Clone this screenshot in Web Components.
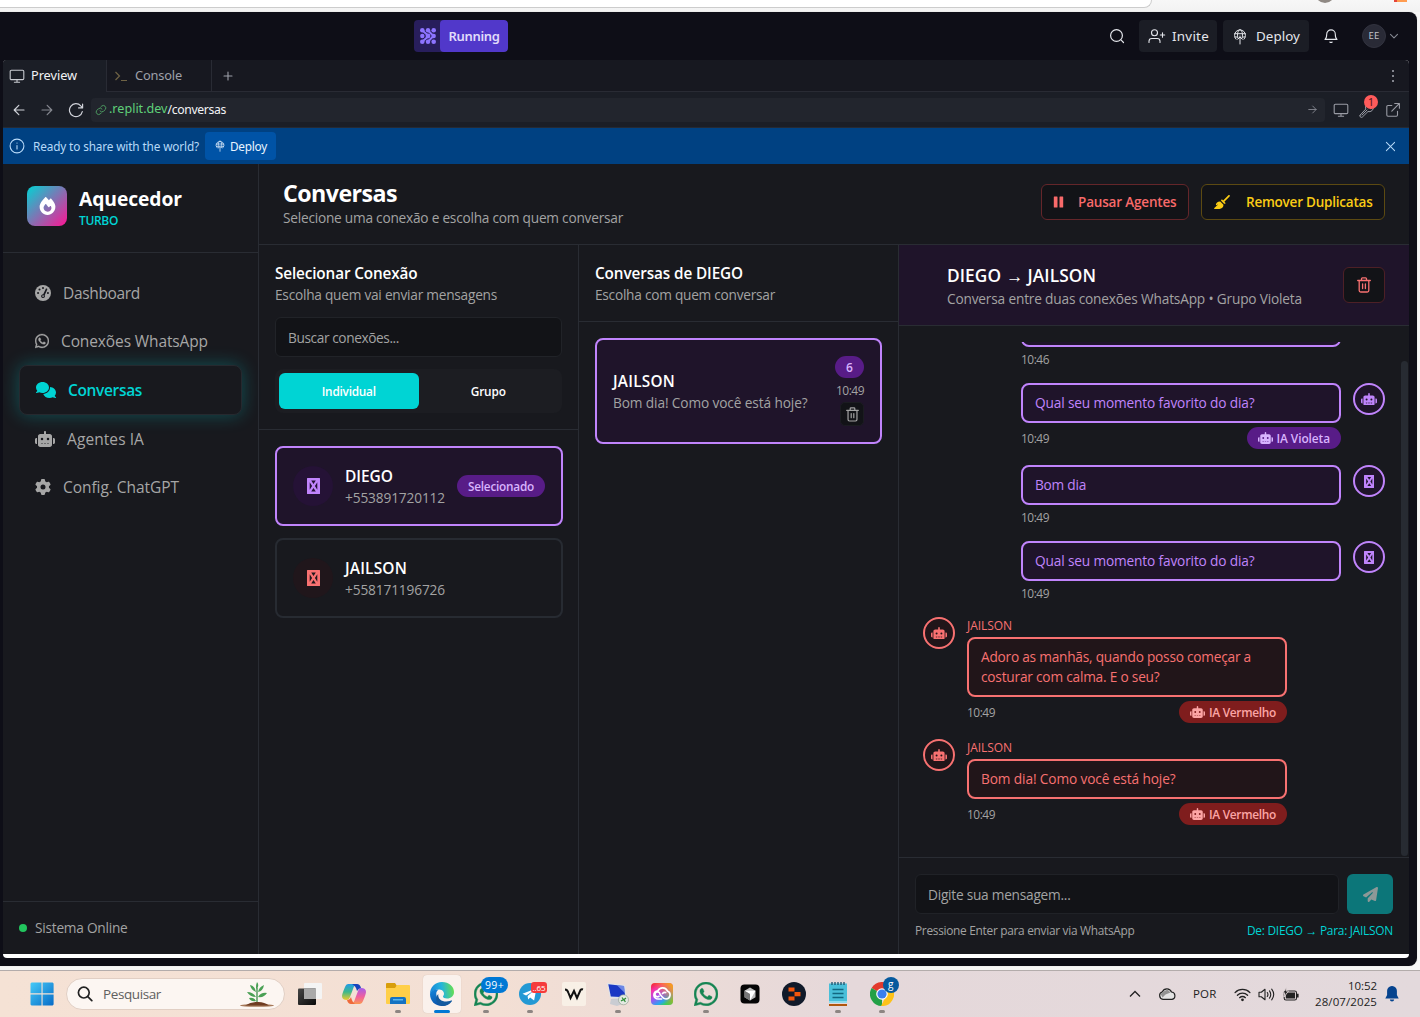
<!DOCTYPE html>
<html lang="pt-BR">
<head>
<meta charset="utf-8">
<title>Aquecedor Turbo</title>
<style>
html,body{margin:0;height:100%;overflow:hidden;background:#f7f7f7}
body{font-family:"Open Sans","Noto Sans",sans-serif}
</style>
</head>
<body>
<desk-screen></desk-screen>
<script>
const robot='<path fill="currentColor" fill-rule="evenodd" d="M320 0c17.7 0 32 14.3 32 32V96H472c39.8 0 72 32.2 72 72V440c0 39.8-32.2 72-72 72H168c-39.8 0-72-32.2-72-72V168c0-39.8 32.2-72 72-72H288V32c0-17.7 14.3-32 32-32zM208 384c-8.8 0-16 7.2-16 16s7.2 16 16 16h32c8.8 0 16-7.2 16-16s-7.2-16-16-16H208zm96 0c-8.8 0-16 7.2-16 16s7.2 16 16 16h32c8.8 0 16-7.2 16-16s-7.2-16-16-16H304zm96 0c-8.8 0-16 7.2-16 16s7.2 16 16 16h32c8.8 0 16-7.2 16-16s-7.2-16-16-16H400zM264 256a40 40 0 1 0 -80 0 40 40 0 1 0 80 0zm152 40a40 40 0 1 0 0-80 40 40 0 1 0 0 80zM48 224H64V416H48c-26.500 0-48-21.500-48-48V272c0-26.500 21.500-48 48-48zm544 0c26.500 0 48 21.500 48 48v96c0 26.500-21.500 48-48 48H576V224h16z"/><path fill="currentColor" opacity=".5" d="M188 380h264v40H188z"/>';
const waPath='M380.9 97.1C339 55.1 283.2 32 223.9 32c-122.4 0-222 99.6-222 222 0 39.1 10.2 77.3 29.6 111L0 480l117.7-30.9c32.4 17.7 68.9 27 106.1 27h.1c122.3 0 224.1-99.6 224.1-222 0-59.3-25.2-115-67.1-157zm-157 341.6c-33.2 0-65.7-8.9-94-25.7l-6.7-4-69.8 18.3L72 359.2l-4.4-7c-18.5-29.4-28.2-63.3-28.2-98.2 0-101.7 82.8-184.5 184.6-184.5 49.3 0 95.6 19.2 130.4 54.1 34.8 34.9 56.2 81.2 56.1 130.5 0 101.8-84.9 184.6-186.6 184.6zm101.2-138.2c-5.5-2.8-32.8-16.2-37.9-18-5.1-1.9-8.8-2.8-12.5 2.8-3.7 5.6-14.3 18-17.6 21.8-3.2 3.7-6.5 4.2-12 1.4-32.6-16.3-54-29.1-75.5-66-5.7-9.8 5.7-9.1 16.3-30.3 1.8-3.7.9-6.9-.5-9.7-1.4-2.8-12.5-30.1-17.1-41.2-4.5-10.8-9.1-9.3-12.5-9.5-3.2-.2-6.9-.2-10.6-.2-3.7 0-9.7 1.4-14.8 6.9-5.1 5.6-19.4 19-19.4 46.3 0 27.3 19.9 53.7 22.6 57.4 2.8 3.7 39.1 59.7 94.8 83.8 35.2 15.2 49 16.5 66.6 13.9 10.7-1.6 32.8-13.4 37.4-26.4 4.6-13 4.6-24.1 3.2-26.4-1.3-2.5-5-3.9-10.5-6.6z';
const line=(d,w=1.5)=>`<g fill="none" stroke="currentColor" stroke-width="${w}" stroke-linecap="round" stroke-linejoin="round">${d}</g>`;
/* name: [viewBox, markup] */
const ICONS={
robot:['0 0 640 512',robot],
comments:['0 0 640 512','<path fill="currentColor" d="M208 352c114.9 0 208-78.8 208-176S322.9 0 208 0S0 78.8 0 176c0 38.6 14.7 74.3 39.6 103.4c-3.5 9.4-8.7 17.7-14.2 24.7c-4.8 6.2-9.7 11-13.3 14.3c-1.8 1.6-3.3 2.9-4.3 3.7c-.5 .4-.9 .7-1.1 .8l-.2 .2C1 327.2-1.4 334.4 .8 340.9S9.1 352 16 352c21.8 0 43.8-5.6 62.1-12.5c9.2-3.5 17.8-7.4 25.2-11.4C134.1 343.3 169.8 352 208 352zM448 176c0 112.3-99.1 196.9-216.5 207C255.8 457.4 336.4 512 432 512c38.2 0 73.9-8.7 104.7-23.9c7.5 4 16 7.9 25.2 11.4c18.3 6.9 40.3 12.5 62.1 12.5c6.9 0 13.1-4.5 15.2-11.1c2.1-6.6-.2-13.8-5.8-17.9l-.2-.2c-.2-.2-.6-.4-1.1-.8c-1-.8-2.5-2-4.3-3.7c-3.6-3.3-8.5-8.1-13.3-14.3c-5.5-7-10.7-15.4-14.2-24.7c24.9-29 39.6-64.7 39.6-103.4c0-92.8-84.9-168.9-192.6-175.5c.4 5.1 .6 10.3 .6 15.5z"/>'],
gear:['0 0 512 512','<path fill="currentColor" fill-rule="evenodd" d="M495.9 166.6c3.2 8.7 .5 18.4-6.4 24.6l-43.3 39.4c1.1 8.3 1.7 16.8 1.7 25.4s-.6 17.1-1.7 25.4l43.3 39.4c6.9 6.2 9.6 15.9 6.4 24.6c-4.4 11.9-9.7 23.3-15.8 34.3l-4.7 8.1c-6.6 11-14 21.4-22.1 31.2c-5.9 7.2-15.7 9.6-24.5 6.8l-55.7-17.7c-13.4 10.3-28.2 18.9-44 25.4l-12.5 57.1c-2 9.1-9 16.3-18.2 17.8c-13.8 2.3-28 3.5-42.5 3.5s-28.7-1.2-42.5-3.5c-9.2-1.5-16.2-8.7-18.2-17.8l-12.5-57.1c-15.8-6.5-30.6-15.1-44-25.4L83.1 425.9c-8.8 2.8-18.6 .3-24.5-6.8c-8.1-9.8-15.5-20.2-22.1-31.2l-4.7-8.1c-6.1-11-11.4-22.4-15.8-34.3c-3.2-8.7-.5-18.4 6.4-24.6l43.3-39.4C64.6 273.1 64 264.6 64 256s.6-17.1 1.7-25.4L22.4 191.2c-6.9-6.2-9.6-15.9-6.4-24.6c4.4-11.9 9.7-23.3 15.8-34.3l4.7-8.1c6.6-11 14-21.4 22.1-31.2c5.9-7.2 15.7-9.6 24.5-6.8l55.7 17.7c13.4-10.3 28.2-18.9 44-25.4l12.5-57.1c2-9.1 9-16.3 18.2-17.8C227.3 1.2 241.5 0 256 0s28.7 1.2 42.5 3.5c9.2 1.5 16.2 8.7 18.2 17.8l12.5 57.1c15.8 6.5 30.6 15.1 44 25.4l55.7-17.7c8.8-2.8 18.6-.3 24.5 6.8c8.1 9.8 15.5 20.2 22.1 31.2l4.7 8.1c6.1 11 11.4 22.4 15.8 34.3zM256 336a80 80 0 1 0 0-160 80 80 0 1 0 0 160z"/>'],
whatsapp:['0 32 448 448',`<path fill="currentColor" stroke="currentColor" stroke-width="10" d="${waPath}"/>`],
gauge:['0 0 512 512','<circle cx="256" cy="256" r="256" fill="currentColor"/><g fill="#18191e"><circle cx="256" cy="96" r="33"/><circle cx="144" cy="144" r="33"/><circle cx="98" cy="256" r="33"/><circle cx="414" cy="256" r="33"/><path fill-rule="evenodd" d="M382 112c11 6 16 20 10 32L310 324c25 45-6 92-54 92-50 0-82-58-47-97 13-15 33-24 54-22l83-178c6-11 21-14 36-7z"/></g><circle cx="257" cy="353" r="28" fill="currentColor"/>'],
fire:['0 0 448 512','<path fill="currentColor" fill-rule="evenodd" d="M159.3 5.4c7.8-7.3 19.9-7.2 27.7 .1c27.6 25.9 53.5 53.8 77.7 84c11-14.4 23.5-30.1 37-42.9c7.9-7.4 20.1-7.4 28 .1c34.6 33 63.9 76.6 84.5 118c20.3 40.8 33.8 82.5 33.8 111.9C448 404.2 348.2 512 224 512C98.4 512 0 404.1 0 276.5c0-38.4 17.8-85.3 45.4-131.7C73.3 97.7 112.7 48.6 159.3 5.4zM225.7 416c25.3 0 47.7-7 68.8-21c42.1-29.4 53.4-88.2 28.1-134.4c-4.5-9-16-9.6-22.5-2l-25.2 29.3c-6.6 7.6-18.5 7.4-24.7-.5c-16.5-21-46-58.5-62.8-79.8c-6.3-8-18.3-8.1-24.7-.1c-33.8 42.5-50.8 69.3-50.8 99.4C112 375.4 162.6 416 225.7 416z"/>'],
broom:['0 0 576 512','<path fill="currentColor" d="M566.6 54.6c12.5-12.5 12.5-32.8 0-45.3s-32.8-12.5-45.3 0l-192 192-34.7-34.7c-4.2-4.2-10-6.6-16-6.6c-12.5 0-22.6 10.1-22.6 22.6v29.1L364.3 320h29.1c12.5 0 22.6-10.1 22.6-22.6c0-6-2.4-11.8-6.6-16l-34.7-34.7 192-192zM341.1 353.4L222.6 234.9c-42.7-3.7-85.2 11.7-115.8 42.3l-8 8C76.5 307.5 64 337.7 64 369.2c0 6.8 7.1 11.2 13.2 8.2l51.1-25.5c5-2.5 9.5 4.1 5.4 7.9L7.3 473.4C2.7 477.6 0 483.6 0 489.9C0 502.1 9.9 512 22.1 512l173.3 0c38.8 0 75.9-15.4 103.4-42.8c30.6-30.6 45.9-73.1 42.3-115.8z"/>'],
plane:['0 0 512 512','<path fill="currentColor" d="M498.1 5.6c10.1 7 15.4 19.1 13.5 31.2l-64 416c-1.5 9.7-7.4 18.2-16 23s-18.9 5.4-28 1.6L284 427.7l-68.5 74.1c-8.9 9.7-22.9 12.9-35.2 8.1S160 493.2 160 480V396.4c0-4 1.5-7.8 4.2-10.7L331.8 202.8c5.8-6.3 5.6-16-.4-22s-15.7-6.4-22-.7L106 360.8 17.7 316.6C7.1 311.3 .3 300.7 0 288.9s5.9-22.8 16.1-28.7l448-256c10.7-6.1 23.9-5.5 34 1.4z"/>'],
pause:['0 0 10 12','<path fill="currentColor" d="M.8.5h2.700q.5 0 .5.5v10q0 .5-.5.5H.8q-.5 0-.5-.5V1Q.3.500.8.5zM6.500.5h2.700q.5 0 .5.5v10q0 .5-.5.5H6.500q-.5 0-.5-.5V1q0-.5.5-.5z"/>'],
tofu:['0 0 13 16','<path fill="currentColor" fill-rule="evenodd" d="M.5 0h12q.5 0 .5.5v15q0 .5-.5.5H.5q-.5 0-.5-.5V.500Q0 0 .5 0zM4.200 2.500h4.600L6.500 5.900zM2.700 4.200 5.100 8 2.700 11.800zM10.300 4.200v7.600L7.900 8zM6.500 10.100l2.300 3.400H4.200z"/>'],
trash:['0 0 14 16',line('<path d="M.7 3.500h12.600M4.500 3.300V1.700q0-.9.9-.9h3.200q.9 0 .9.9v1.600M2.200 3.700v9.800q0 1.500 1.500 1.500h6.600q1.500 0 1.500-1.500V3.700M5.600 7v4.500M8.400 7v4.500"/>',1.3)],
search:['0 0 16 16',line('<circle cx="7.500" cy="7.500" r="5.900"/><path d="m12.200 12.200 2.300 2.300"/>',1.2)],
invite:['0 0 18 16',line('<circle cx="6.500" cy="4.800" r="3"/><path d="M1 14.500v-1.200c0-1.700 1.200-2.800 2.800-2.800h5.400c1.600 0 2.800 1.100 2.800 2.800v1.200M14.500 4.800v4.400M12.300 7h4.400"/>',1.1)],
globe:['0 0 16 17',line('<path d="M4 11.200A5.500 5.500 0 1 1 12 11.200M6 10.300C4.500 5.500 6.500 1.600 8 1.600s3.500 3.900 2 8.700M2.700 5.700h10.600M3 9h2.500M10.500 9H13M8 16V8M5.800 11.200 8 9l2.200 2.200"/>',1)],
bell:['0 0 16 16',line('<path d="M3.700 6.200a4.300 4.300 0 0 1 8.600 0c0 4 1.700 5.200 1.700 5.200H2s1.700-1.200 1.700-5.200M6.800 14q1.200 1 2.400 0"/>',1.1)],
chev:['0 0 10 10',line('<path d="m1.500 3.300 3.500 3.500 3.500-3.500"/>',1.1)],
monitor:['0 0 16 16',line('<rect x="1.200" y="2.200" width="13.600" height="9.400" rx="1.200"/><path d="M8 11.900v2.400M5.400 14.300h5.200"/>',1.1)],
prompt:['0 0 14 12','<g fill="none" stroke="#6f6345" stroke-width="1.200"><path d="m1.500 2 4 4-4 4"/><path d="M7 10.500h6"/></g>'],
plus:['0 0 10 10',line('<path d="M5 1v8M1 5h8"/>',1.1)],
dots:['0 0 4 14','<g fill="currentColor"><circle cx="2" cy="2" r="1.100"/><circle cx="2" cy="7" r="1.100"/><circle cx="2" cy="12" r="1.100"/></g>'],
left:['0 0 12 12',line('<path d="M11 6H1.200M5.800 1.300 1.200 6l4.600 4.700"/>',1.2)],
right:['0 0 12 12',line('<path d="M1 6h9.800M6.200 1.300 10.800 6l-4.600 4.700"/>',1.2)],
reload:['0 0 16 16',line('<path d="M14.600 2v3.900h-4M14.300 9.600A6.500 6.500 0 1 1 12.800 3.800l1.800 2"/>',1.2)],
link:['0 0 12 12',line('<path d="M5 7a2.500 2.500 0 0 0 3.600.2l1.700-1.700A2.500 2.500 0 0 0 6.800 2l-1 1M7 5a2.500 2.500 0 0 0-3.600-.2L1.700 6.500A2.500 2.500 0 0 0 5.200 10l1-1"/>',1)],
wrench:['0 0 16 16',line('<path d="m1.200 13 5.600-6A4 4 0 0 1 11 1.500L9.200 4.300l2.300 2.300L14.200 5A4 4 0 0 1 9 9.500L3.300 15.100a1.500 1.500 0 0 1-2.100-2.100zM3 13l5-5"/>',1)],
external:['0 0 16 16',line('<path d="M6.800 3.500H3q-1.200 0-1.200 1.200V13q0 1.200 1.200 1.200h8.300q1.200 0 1.200-1.200V9.200M9.700 1.500h4.700v4.700M6.800 9.100l7.400-7.400"/>',1.1)],
info:['0 0 16 16',line('<circle cx="8" cy="8" r="6.900"/><path d="M8 7.500v3.500M8 5v.1"/>',1.1)],
close:['0 0 12 12',line('<path d="m1.500 1.500 9 9M10.500 1.500l-9 9"/>',1.1)],
grid:['0 0 16 16','<g fill="#8d74ff" stroke="#8d74ff"><path d="M2.500 2.500 8 7.500M8 2.500l5.500 5.500M2.500 13.500 8 8.500M8 13.500 13.500 8" stroke-width="2"/><g stroke="none"><circle cx="2.300" cy="2.300" r="2.300"/><circle cx="8" cy="2.300" r="2.200"/><circle cx="13.700" cy="2.300" r="2.300"/><circle cx="2.300" cy="8" r="2.200"/><circle cx="8" cy="8" r="2.400"/><circle cx="13.700" cy="8" r="2.200"/><circle cx="2.300" cy="13.700" r="2.300"/><circle cx="8" cy="13.700" r="2.200"/><circle cx="13.700" cy="13.700" r="2.300"/></g></g>'],
/* taskbar */
win:['0 0 24 24','<defs><linearGradient id="g" gradientUnits="userSpaceOnUse" x1="0" y1="0" x2="24" y2="24"><stop stop-color="#47cdf9"/><stop offset="1" stop-color="#0569c6"/></linearGradient></defs><path fill="url(#g)" d="M1.500.5h10v10.800H.5V1.500zM12.600.5h10l1 1v9.800h-11zM.5 12.400h11v11.100h-10l-1-1zM12.600 12.400h11v10.100l-1 1h-10z"/>'],
tsearch:['0 0 16 16','<g fill="none" stroke="#222" stroke-width="1.700" stroke-linecap="round"><circle cx="6.800" cy="6.600" r="5.400"/><path d="m10.800 10.700 4 4"/></g>'],
plant:['0 0 36 28','<ellipse cx="18" cy="25.500" rx="17" ry="1.300" fill="#a77a5a"/><path d="M6 25.500q6-4 12-3.500 7-.5 12 3.500z" fill="#6f3c22"/><path d="M18 22V8" stroke="#3d8e49" stroke-width="1.300"/><g fill="#4aa055"><path d="M17 8q0-4 1-6 2.500 3 0 7zM17 12Q12 10 11 5q5 1 6 7zM19 12q1-5 6-7-1 6-6 7zM17 17Q11 17 8 12q6 0 9 5zM19 17q3-5 9-4-3 5-9 4zM17 21q-5 1-7-3 5-1 7 3z"/></g>'],
taskview:['0 0 24 24','<defs><linearGradient id="g" x2="1" y2="1"><stop stop-color="#464646"/><stop offset="1" stop-color="#090909"/></linearGradient></defs><rect x="6" y="1" width="18" height="16" rx="1" fill="#f4f4f4"/><rect y="6.500" width="18" height="16.500" rx="1" fill="url(#g)"/><path fill="#a9a9a9" d="M6 6.500h12V17H6z"/>'],
copilot:['0 0 24 22','<defs><linearGradient id="a" x2="0" y2="1"><stop stop-color="#229be8"/><stop offset=".5" stop-color="#3fb88a"/><stop offset="1" stop-color="#f1c92a"/></linearGradient><linearGradient id="b" x2="0" y2="1"><stop stop-color="#a65bea"/><stop offset=".55" stop-color="#f0609d"/><stop offset="1" stop-color="#fb9851"/></linearGradient></defs><path d="M6 1h9q-3 1-4 5L8 14q-1 3-3 3-5 0-5-4 0-2 3-9 1-3 3-3z" fill="url(#a)"/><path d="M18 21H9q3-1 4-5l3-8q1-3 3-3 5 0 5 4 0 2-3 9-1 3-3 3z" fill="url(#b)"/><path d="M10 1h5q3 0 4 4-2 0-4 3-1-5-5-7z" fill="#1743bd"/><path d="M5 17q3 0 4-3 1 5 4 7H9q-3 0-4-4z" fill="#ef6a3a"/>'],
folder:['0 0 24 24','<path fill="#d89e0b" d="M0 2q0-1 1-1h8l2 3h12v5H0z"/><path fill="#ffcf48" d="M0 6h9l2-3h12q1 0 1 1v17q0 1-1 1H1q-1 0-1-1z"/><path fill="#1673c2" d="M4 22v-5q0-2 2-2h12q2 0 2 2v5z"/><path fill="#5bb7ec" d="M7 17h10v1.500H7z"/>'],
edge:['0 0 24 24','<defs><linearGradient id="a" x1="0" y1=".5" x2="1" y2=".4"><stop stop-color="#1785d8"/><stop offset=".5" stop-color="#25b4dc"/><stop offset="1" stop-color="#67e04d"/></linearGradient><linearGradient id="b" x2=".5" y2="1"><stop stop-color="#1286dd"/><stop offset="1" stop-color="#0b4fa4"/></linearGradient></defs><path fill="url(#a)" d="M0 12C0 5 5 0 12 0s12 4.500 12 10c0 4-3 6.500-7 6.500-2.500 0-4-1-4-2 0-.7 1-1.200 1-2.800C14 9 11.500 7.500 8.500 7.500 4 7.500.5 10 0 12z"/><path fill="url(#b)" d="M0 12C.5 9 4 7 8.500 7.500c-2.500 2-2.500 4-2 6C7.500 19 14 22 21.500 18.500 19 22.500 15.500 24 12 24 5 24 0 19 0 12z"/><path fill="#135a9f" d="M8.300 12c-1 6 6 9.500 13.200 6.500.6-.3.700.2.400.7C19.500 22.500 16 24 12.500 24 5 22 5 15 8.300 12z"/>'],
wapp:['0 32 448 448',`<path fill="#168553" stroke="#168553" stroke-width="8" d="${waPath}"/>`],
telegram:['0 0 24 24','<circle cx="12" cy="12" r="11" fill="#2399d4"/><path fill="#fff" d="m4.500 11.700 14-5.500-2.400 12.300-4-3-2 2-.5-3.500 6-5.300-7.500 4.700z"/>'],
wmark:['0 0 24 24','<rect width="24" height="24" rx="2" fill="#f8f0e6"/><path d="M3 7.500q2.500 0 3.500 3.500l2 5L12 9l3 7 3.500-8q1-1 2.500-.5" fill="none" stroke="#111" stroke-width="2"/>'],
remote:['0 0 24 24','<path fill="#c9ccd2" d="m5 17 11-1 3 5-8 3-7-2z"/><path fill="#dfe3ea" d="m1 1 18 2 2 14-17-1z"/><path fill="#1b38c4" d="m2.300 2.300 15.700 1.800 1.200 11.200-14.400-.8z"/><path fill="#8fa8f4" d="m11 3.300 7 .8.800 7z" opacity=".7"/><circle cx="17.500" cy="17.800" r="5" fill="#e4e9e2" stroke="#8a9a8a" stroke-width=".6"/><path d="m15 19 2.500-1.500L16 15.500m4 .5-2.200 1.700 1.600 2.100" fill="none" stroke="#2d8a35" stroke-width="1.200"/>'],
cc:['0 0 24 24','<defs><linearGradient id="a" y2="1" x2=".6"><stop stop-color="#f32020"/><stop offset=".3" stop-color="#f533b1"/><stop offset=".6" stop-color="#9d56f3"/><stop offset=".85" stop-color="#29a5ef"/><stop offset="1" stop-color="#38d05d"/></linearGradient><linearGradient id="b" x1="1" x2="0" y2=".7"><stop stop-color="#ffb000"/><stop offset=".7" stop-color="#ff8a00" stop-opacity="0"/></linearGradient></defs><rect x="1" y="1" width="22" height="22" rx="4" fill="url(#a)"/><rect x="1" y="1" width="22" height="22" rx="4" fill="url(#b)"/><g fill="none" stroke="#fff" stroke-width="1.700" stroke-linecap="round"><path d="M11.500 17H8.200a4.100 4.100 0 0 1-.4-8.200 5.300 5.300 0 0 1 9.700.3A4.100 4.100 0 0 1 16 17c-2 0-3-1-4.200-2.500L10 12.300A2.500 2.500 0 1 0 9 14.300M12.500 11.500q1.500-1.600 3.200-1"/></g>'],
cursor:['0 0 24 24','<rect x="2.500" y="2.500" width="19" height="19" rx="4" fill="#050505"/><path fill="#bdbdbd" d="m12 5.500 5.500 3.200v6.600L12 18.500l-5.500-3.200V8.700z"/><path fill="#fff" d="M6.500 8.700h11L12 18.500V12z"/><path fill="#777" d="M6.500 8.700 12 12v6.500l-5.500-3.200z"/>'],
replit:['0 0 24 24','<circle cx="12" cy="12" r="12" fill="#111a2a"/><path fill="#f2560d" d="M6.500 5.500h6v4h-6zM12.500 10h6v4.200h-6zM6.500 14.500h6v4h-6z"/>'],
notepad:['0 0 24 24','<path fill="#49bfd9" d="M3 1.500h18V21H3z"/><path fill="#8fdcec" d="M3 19h18v2H3z"/><path fill="#b0570e" d="M3 22h18v2H3z"/><path d="M6 0v3M9 0v3M12 0v3M15 0v3M18 0v3" stroke="#19506a" stroke-width="1.300"/><path d="M6.500 7.500h11M6.500 11.500h11M6.500 15.500h11" stroke="#126781" stroke-width="1.300"/>'],
chrome:['0 0 24 24','<path fill="#e23a2d" d="M12 12 1.600 6A12 12 0 0 1 22.400 6z"/><path fill="#23a047" d="M1.600 6 12 12l0 12A12 12 0 0 1 1.600 6z"/><path fill="#fdc21a" d="M22.400 6A12 12 0 0 1 11 24l5-10V6z"/><circle cx="12" cy="12" r="5.800" fill="#fff"/><circle cx="12" cy="12" r="4.600" fill="#3a7fee"/>'],
up:['0 0 12 8','<path d="m1 6.500 5-5 5 5" fill="none" stroke="#222" stroke-width="1.300"/>'],
cloud:['0 0 18 14','<path d="M5 12.300a3.800 3.800 0 0 1-.7-7.400A5 5 0 0 1 13.500 5a3.700 3.700 0 0 1 .5 7.300z" fill="#e3e3e3" stroke="#222" stroke-width="1.200"/><path d="m2.500 7 3-2.500 4-2 3 3-5 2-3 3z" fill="#929292"/>'],
wifi:['0 0 16 14','<g fill="none" stroke="#222" stroke-width="1.200" stroke-linecap="round"><path d="M1 5.200a9.800 9.800 0 0 1 14 0M3.200 7.700a6.700 6.700 0 0 1 9.600 0M5.300 10a3.800 3.800 0 0 1 5.400 0"/></g><circle cx="8" cy="12" r="1.300" fill="#222"/>'],
volume:['0 0 17 14','<g fill="none" stroke="#222" stroke-width="1.100" stroke-linejoin="round" stroke-linecap="round"><path d="M1 4.800h2.300L7 1.800v10.400L3.300 9.200H1zM9.300 5q1.300 2 0 4M11.500 3.400q2.500 3.600 0 7.200M13.700 1.700q4 5.300 0 10.600"/></g>'],
battery:['0 0 17 14','<rect x="2.200" y="3.500" width="12.300" height="9" rx="1.800" fill="none" stroke="#222" stroke-width="1.100"/><path fill="#222" d="M3.800 5h9.200v6H3.800zM14.700 6.300h1.900v3.600h-1.900z"/><path fill="#222" stroke="#e4d9db" stroke-width=".9" d="M4.500 0 .8 5.400h2L2 9.500l4.500-6H4z"/>'],
tbell:['0 0 14 16','<path fill="#05438e" d="M7 0a4.800 4.800 0 0 1 4.900 5v4l1.800 3.500H.3L2.100 9V5A4.800 4.800 0 0 1 7 0zM4.800 13.500h4.400Q9 15.600 7 15.600t-2.200-2.100z"/>'],
};
const fits=[];
customElements.define('fit-text',class extends HTMLElement{
  constructor(){super();this.attachShadow({mode:'open'}).innerHTML='<style>:host{display:inline-block;white-space:nowrap;flex:none}</style><span><slot></slot></span>';}
  connectedCallback(){fits.push(this);}
  /* spreads the label over the width given in w */
  fit(){const s=this.shadowRoot.querySelector('span'),w=+this.getAttribute('w'),n=s.getBoundingClientRect().width;
    this.style.letterSpacing=((w-n)/this.textContent.length).toFixed(3)+'px';this.style.width=w+'px';}
});
customElements.define('ui-icon',class extends HTMLElement{
  connectedCallback(){if(this.shadowRoot)return;const [vb,m]=ICONS[this.getAttribute('name')],w=this.getAttribute('w'),h=this.getAttribute('h')||w;
    this.attachShadow({mode:'open'}).innerHTML=`<style>:host{display:inline-flex;flex:none;width:${w}px;height:${h}px}svg{width:100%;height:100%;display:block}</style><svg viewBox="${vb}">${m}</svg>`;}
});
const BASE='*{box-sizing:border-box}';
function define(name,css,html){
  customElements.define(name,class extends HTMLElement{
    connectedCallback(){if(this.shadowRoot)return;
      const a=k=>this.getAttribute(k)||'',body=typeof html==='function'?html(a,this):html;
      this.attachShadow({mode:'open'}).innerHTML=`<style>${BASE}${css}</style>${body}`;}
  });
}
const T=(w,t,c='')=>`<fit-text w="${w}"${c?` class="${c}"`:''}>${t}</fit-text>`;
const I=(n,w,h)=>`<ui-icon name="${n}" w="${w}" h="${h||w}"></ui-icon>`;

define('desk-screen',':host{display:flex;flex-direction:column;width:1420px;height:1017px;background:#f7f7f7}','<browser-edge></browser-edge><replit-window></replit-window><task-bar></task-bar>');

define('browser-edge',':host{display:flex;height:12px;align-items:flex-start;background:linear-gradient(#f7f7f7,#f2f2f2);overflow:hidden}.u{width:1152px;height:8px;background:#fff;border:1px solid #ccc;border-width:0 1px 1px 0;border-radius:0 0 14px 0}.a{width:20px;height:20px;border-radius:50%;background:#8f8984;margin:-17px 0 0 163px}.b{width:13px;height:2px;background:linear-gradient(90deg,#e5443a 25%,#ff9c50 25%);margin-left:59px}','<div class="u"></div><div class="a"></div><div class="b"></div>');

define('replit-window',':host{display:flex;flex-direction:column;width:1417px;height:954px;background:#0e0e17;border-radius:0 8px 8px 0;flex:none;box-shadow:0 0 1px #0004}.pane{margin-left:3px;width:1406px;height:898px;display:flex;flex-direction:column;border-radius:4px;overflow:hidden;background:#fff}','<replit-header></replit-header><div class="pane"><pane-tabs></pane-tabs><url-row></url-row><share-banner></share-banner><app-shell></app-shell></div>');

define('replit-header',`:host{display:flex;height:48px;align-items:center;font-family:"Noto Sans",Roboto,sans-serif;color:#e4e6eb;font-size:13.400px;line-height:20px}
.run{display:flex;margin-left:414px;width:94px;height:32px;border-radius:4px;background:#281e5c;align-items:center;overflow:hidden}.run ui-icon{margin:0 4px 0 6px}.run b{display:flex;width:68px;height:32px;background:#5138ca;border-radius:4px;align-items:center;justify-content:center;font-weight:600;font-size:13px;color:#e0dcfa}
.r{display:flex;align-items:center;margin-left:601px}.btn{height:32px;border-radius:4px;background:#1b1d25;display:flex;align-items:center}.av{width:24px;height:24px;border-radius:50%;background:#292a36;border:1px solid #32333f;display:grid;place-items:center;font-size:9.500px;line-height:12px;color:#c0c1c8}`,
`<div class="run">${I('grid',16)}<b>${T(51,'Running')}</b></div><div class="r">${I('search',16)}<div class="btn" style="width:78px;margin-left:14px;padding-left:9px;gap:6px">${I('invite',18,16)}${T(37,'Invite')}</div><div class="btn" style="width:86px;margin-left:6px;padding-left:9px;gap:8px">${I('globe',16,17)}${T(44,'Deploy')}</div><ui-icon name="bell" w="16" style="margin-left:14px"></ui-icon><div class="av" style="margin-left:23px">${T(11,'EE')}</div><ui-icon name="chev" w="10" style="margin-left:3px;color:#858892"></ui-icon></div>`);

define('pane-tabs',`:host{display:flex;height:32px;background:#171820;font:12.800px/18px "Noto Sans",sans-serif;color:#9ea0a9;flex:none}
div{display:flex;align-items:center;border-bottom:1px solid #292b34;height:32px}fit-text{margin-top:-1px}.p{width:103px;background:#1b1e26;border:0;padding:0 0 1px 6px;gap:6px;color:#f1f2f4}.c{width:106px;border-left:1px solid #292b34;border-right:1px solid #292b34;padding-left:7px;gap:7px}.x{flex:1;padding-left:11px;justify-content:space-between;padding-right:14px}`,
`<div class="p"><ui-icon name="monitor" w="16" style="color:#c9cbd1"></ui-icon>${T(46,'Preview')}</div><div class="c">${I('prompt',14,12)}${T(47,'Console')}</div><div class="x">${I('plus',10)}${I('dots',4,14)}</div>`);

define('url-row',`:host{display:flex;height:36px;background:#1b1e26;align-items:center;border-bottom:1px solid #252a34;color:#cfd1d8;flex:none;font:12.200px/18px "Noto Sans",sans-serif}
.u{display:flex;align-items:center;width:1234px;height:24px;border-radius:4px;background:#22252d;padding:0 8px 0 4px}.g{color:#5fd079;font-size:12.600px;margin-top:-1px}.w{color:#f3f4f6}.u ui-icon{color:#878992}.k{color:#4d9a61!important;margin-right:2px}.end{margin-left:auto}.t{display:flex;margin-left:8px;gap:10px;color:#9a9ca5;position:relative}.n{position:absolute;left:31px;top:-7px;width:14px;height:14px;border-radius:50%;background:#ff5b5b;color:#501014;font-size:10.500px;line-height:14px;text-align:center}`,
`<span style="display:flex;align-items:center;padding-left:10px;gap:15.500px">${I('left',12)}<ui-icon name="right" w="12" style="color:#85878f"></ui-icon>${I('reload',16)}</span><div class="u" style="margin-left:7px"><ui-icon class="k" name="link" w="12"></ui-icon>${T(58.500,'.replit.dev','g')}${T(58.500,'/conversas','w')}<ui-icon class="end" name="right" w="9"></ui-icon></div><div class="t">${I('monitor',16)}${I('wrench',16)}${I('external',16)}<span class="n">1</span></div>`);

define('share-banner',`:host{display:flex;height:36px;flex:none;background:#004182;align-items:center;padding:0 13px 0 6px;color:#b6d9f8;font:11.800px/18px "Noto Sans",sans-serif}
fit-text{margin-top:-1px}.b{display:flex;align-items:center;width:71px;height:28px;background:#0053a6;border-radius:4px;padding-left:9px;gap:4px;margin-left:6px;color:#e9f4ff}`,
`${I('info',16)}<span style="width:8px"></span>${T(166,'Ready to share with the world?')}<div class="b">${I('globe',12)}${T(37,'Deploy')}</div><ui-icon name="close" w="11" style="margin-left:auto"></ui-icon>`);

define('app-shell',`:host{display:flex;height:790px;flex:none;background:#18191e;color:#fff;--line:#292c33;--mut:#a3a3a3}.m{width:1150px;display:flex;flex-direction:column}.c{display:flex;height:709px}`,
'<side-nav></side-nav><div class="m"><main-head></main-head><div class="c"><connection-list></connection-list><conversation-list></conversation-list><chat-panel></chat-panel></div></div>');

define('side-nav',`:host{display:flex;flex-direction:column;width:256px;border-right:1px solid var(--line);box-sizing:border-box}
.top{display:flex;height:89px;border-bottom:1px solid var(--line);padding:22px 24px 0;gap:12px}.logo{width:40px;height:40px;border-radius:8px;background:linear-gradient(135deg,#00d4d4,#ff1493);display:grid;place-items:center;color:#fff}.n{display:flex;flex-direction:column;margin-top:-1px}.a{font-size:19.300px;font-weight:700;line-height:28px}.t{font-size:12px;font-weight:600;line-height:16px;color:#00d4d4}
nav{display:flex;flex-direction:column;padding:16px 16px;flex:1}.f{display:flex;height:53px;border-top:1px solid var(--line);align-items:center;padding-left:16px;gap:8px;color:var(--mut);font-size:13.700px;line-height:20px}.d{width:8px;height:8px;border-radius:50%;background:#22c55e}`,
`<div class="top"><div class="logo">${I('fire',17,18)}</div><div class="n">${T(103,'Aquecedor','a')}${T(39,'TURBO','t')}</div></div><nav><nav-item icon="gauge" iw="16" w="77" label="Dashboard"></nav-item><nav-item icon="whatsapp" iw="14" w="147" label="Conexões WhatsApp"></nav-item><nav-item icon="comments" iw="20" w="74" label="Conversas" active></nav-item><nav-item icon="robot" iw="20" w="77" label="Agentes IA"></nav-item><nav-item icon="gear" iw="16" w="116" label="Config. ChatGPT"></nav-item></nav><div class="f"><span class="d"></span>${T(92.500,'Sistema Online')}</div>`);

define('nav-item',`:host{display:flex;height:48px;align-items:center;padding-left:16px;gap:12px;color:#a6a6a6;font-size:15.500px;line-height:24px}
:host([active]){height:50px;width:223px;margin:0;padding-left:16px;background:#18191e;border:1px solid #26292f;border-radius:8px;color:#00d4d4;font-weight:600;box-shadow:0 0 18px #00d4d44d;box-sizing:border-box}`,
a=>`${I(a('icon'),a('iw'),16)}${T(a('w'),a('label'))}`);

define('main-head',`:host{display:flex;height:81px;border-bottom:1px solid var(--line);padding:16px 24px 0;justify-content:space-between;box-sizing:border-box}
.l,.r{display:flex}.l{flex-direction:column}.h{font-size:23.200px;line-height:28px;font-weight:700;margin:-1px 0 1px}.s{font-size:13.700px;line-height:20px;color:var(--mut)}.r{gap:12px;padding-top:4px}.b{height:36px;border-radius:6px;background:#121317;display:flex;align-items:center;font-size:13.500px;font-weight:600;line-height:20px}`,
`<div class="l">${T(114,'Conversas','h')}${T(340,'Selecione uma conexão e escolha com quem conversar','s')}</div><div class="r"><div class="b" style="width:148px;border:1px solid #64262a;color:#f86a6a;padding-left:11px;gap:14px">${I('pause',11,12)}${T(98.500,'Pausar Agentes')}</div><div class="b" style="width:184px;border:1px solid #5c4a12;color:#facc15;padding-left:12px;gap:16px">${I('broom',16,14)}${T(126.500,'Remover Duplicatas')}</div></div>`);

define('connection-list',`:host{display:block;width:320px;border-right:1px solid var(--line);box-sizing:border-box}
.h{height:185px;border-bottom:1px solid var(--line);padding:16px;display:flex;flex-direction:column}.t{font-size:15.300px;font-weight:600;line-height:24px}.s{font-size:13.700px;line-height:20px;color:var(--mut)}.i{height:40px;border:1px solid #212328;border-radius:6px;background:#121317;display:flex;align-items:center;padding:1px 0 0 12px;color:var(--mut);font-size:13.700px;margin-top:12px;line-height:20px}
.g{height:44px;background:#1c1d22;border-radius:8px;margin-top:12px;padding:4px;display:flex;font-size:11.800px;font-weight:600;line-height:16px}.g>*{flex:1;display:grid;place-items:center}.on{background:#00d4d4;border-radius:6px}.l{padding:16px 0 0 16px;display:flex;flex-direction:column;gap:12px}`,
`<div class="h">${T(142.500,'Selecionar Conexão','t')}${T(222,'Escolha quem vai enviar mensagens','s')}<div class="i">${T(111,'Buscar conexões...')}</div><div class="g"><div class="on">${T(54,'Individual')}</div><div>${T(35,'Grupo')}</div></div></div><div class="l"><connection-card name="DIEGO" nw="48" phone="+553891720112" selected></connection-card><connection-card name="JAILSON" nw="62" phone="+558171196726"></connection-card></div>`);

define('connection-card',`:host{display:flex;width:288px;height:80px;border:2px solid #272b32;border-radius:8px;align-items:center;padding:0 16px;box-sizing:border-box;gap:12px}:host([selected]){border-color:#c084fc;background:#1f142a}
.av{width:40px;height:40px;border-radius:50%;background:#20161b;color:#f87171;display:grid;place-items:center}:host([selected]) .av{background:#251236;color:#c084fc}.n{display:flex;flex-direction:column}.a{font-size:15.500px;font-weight:600;line-height:24px}.p{font-size:13.700px;line-height:20px;color:var(--mut)}.b{width:88px;height:22px;border-radius:11px;background:#581c87;color:#d8b4fe;display:grid;place-items:center;font-size:11.800px;font-weight:600;line-height:16px}`,
(a,e)=>`<div class="av">${I('tofu',13,16)}</div><div class="n">${T(a('nw'),a('name'),'a')}${T(100,a('phone'),'p')}</div>${e.hasAttribute('selected')?`<div class="b">${T(66,'Selecionado')}</div>`:''}`);

define('conversation-list',`:host{display:block;width:320px;border-right:1px solid var(--line);box-sizing:border-box}
.h{height:77px;border-bottom:1px solid var(--line);padding:16px;display:flex;flex-direction:column}.t{font-size:15.300px;font-weight:600;line-height:24px}.s{font-size:13.700px;line-height:20px;color:var(--mut)}.c{margin:16px;width:287px;height:106px;border:2px solid #c084fc;border-radius:8px;background:#1f142a;display:flex;align-items:center;justify-content:space-between;padding:0 16px}.n,.r{display:flex;flex-direction:column}.r{align-items:flex-end;font-size:12px;line-height:16px;color:var(--mut)}.b{width:29px;height:22px;border-radius:11px;background:#581c87;color:#d8b4fe;display:grid;place-items:center;font-weight:600;padding-top:1px}.x{width:24px;height:24px;background:#121317;border:1px solid #1b1c21;border-radius:5px;display:grid;place-items:center}`,
`<div class="h">${T(148,'Conversas de DIEGO','t')}${T(180,'Escolha com quem conversar','s')}</div><div class="c"><div class="n">${T(62,'JAILSON','t')}${T(194.500,'Bom dia! Como você está hoje?','s')}</div><div class="r"><div class="b">${T(7,'6')}</div><span style="height:5px"></span>${T(28,'10:49')}<span style="height:3px"></span><div class="x">${I('trash',13,15)}</div></div></div>`);

define('chat-panel',`:host{display:flex;flex-direction:column;width:510px}
.h{height:81px;flex:none;background:#1f142a;border-bottom:1px solid var(--line);display:flex;padding:17px 24px 0 48px;justify-content:space-between}.n{display:flex;flex-direction:column}.t{font-size:17.300px;font-weight:600;line-height:27px}.s{font-size:13.700px;line-height:20px;color:var(--mut)}.x{width:42px;height:36px;margin-top:5px;border:1px solid #4d2026;border-radius:6px;background:#121317;color:#f87171;display:grid;place-items:center}
.b{display:flex;flex:none;height:515px;margin-top:16px;overflow:hidden;position:relative}.m{display:flex;flex-direction:column;gap:16px;padding:0 0 0 24px;width:486px;margin-top:-35px}.bar{width:7px;height:495px;border-radius:4px;background:#272b32;margin:19px 0 0 16px}
.f{height:97px;border-top:1px solid var(--line);padding:16px;display:flex;flex-direction:column}.r{display:flex;gap:8px}.i{width:424px;height:40px;background:#121317;border:1px solid #202227;border-radius:6px;display:flex;align-items:center;padding:1px 0 0 12px;color:var(--mut);font-size:13.700px;line-height:20px}.p{width:46px;height:40px;border-radius:6px;background:#0c7679;color:#8c9897;display:grid;place-items:center}.k{display:flex;justify-content:space-between;margin-top:8px;font-size:11.900px;line-height:16px;color:var(--mut)}.q{color:#00d4d4}`,
`<div class="h"><div class="n">${T(149,'DIEGO → JAILSON','t')}${T(355,'Conversa entre duas conexões WhatsApp • Grupo Violeta','s')}</div><div class="x">${I('trash',14,16)}</div></div><div class="b"><div class="m"><chat-message me time="10:46"></chat-message><chat-message me lines="Qual seu momento favorito do dia?|219.5" time="10:49" bot="IA Violeta|53.5"></chat-message><chat-message me lines="Bom dia|51" time="10:49"></chat-message><chat-message me lines="Qual seu momento favorito do dia?|219.5" time="10:49"></chat-message><chat-message lines="Adoro as manhãs, quando posso começar a|270;costurar com calma. E o seu?|178.5" time="10:49" bot="IA Vermelho|67"></chat-message><chat-message lines="Bom dia! Como você está hoje?|194.5" time="10:49" bot="IA Vermelho|67"></chat-message></div><div class="bar"></div></div><div class="f"><div class="r"><div class="i">${T(142.500,'Digite sua mensagem...')}</div><div class="p">${I('plane',15)}</div></div><div class="k">${T(219.500,'Pressione Enter para enviar via WhatsApp')}${T(146,'De: DIEGO → Para: JAILSON','q')}</div></div>`);

define('chat-message',`:host{display:flex;flex:none;gap:12px;--c:#f87171;--bg:#211519;--pill:#7f1d1d;--pt:#fca5a5}:host([me]){justify-content:flex-end;--c:#c084fc;--bg:#1f142a;--pill:#581c87;--pt:#d8b4fe}
.av{width:32px;height:32px;border:2px solid var(--c);border-radius:50%;background:var(--bg);color:var(--c);display:grid;place-items:center;flex:none}:host([me]) .av{order:2}.col{width:320px;display:flex;flex-direction:column}.n{font-size:12px;line-height:16px;color:var(--c);margin:1px 0 3px}.bub{min-height:40px;border:2px solid var(--c);border-radius:8px;background:var(--bg);padding:8px 12px;color:var(--c);font-size:13.700px;line-height:20px;display:flex;flex-direction:column}.r{display:flex;justify-content:space-between;align-items:center;margin-top:4px;font-size:11.900px;line-height:16px;color:var(--mut);min-height:16px}.pill{height:22px;border-radius:11px;background:var(--pill);color:var(--pt);display:flex;align-items:center;gap:4px;padding:0 11px;font-weight:600}`,
(a,e)=>{const me=e.hasAttribute('me'),bot=a('bot').split('|');return `<div class="av">${a('bot')?I('robot',16,12.8):I('tofu',10.500,13)}</div><div class="col">${me?'':T(45,'JAILSON','n')}<div class="bub">${a('lines')?a('lines').split(';').map(l=>{const [t,w]=l.split('|');return T(w,t)}).join(''):''}</div><div class="r">${T(28,a('time'))}${a('bot')?`<span class="pill">${I('robot',15,12)}${T(bot[1],bot[0])}</span>`:''}</div></div>`});

define('task-bar',`:host{display:flex;height:47px;flex:none;margin-top:4px;border-top:1px solid #b3acab;background:linear-gradient(90deg,#f5e2d5,#f3dfd4 35%,#e5d8da 60%,#e3d9dc);align-items:center;box-sizing:border-box;font-size:11.500px;line-height:16px;color:#1d1d1d}
.s{display:flex;width:219px;height:32px;border-radius:16px;background:#fcf6f2;border:1px solid #e1cfc4;margin:0 3px 0 12px;align-items:center;padding:0 9px 0 10px;font-size:13.500px;color:#606060;gap:10px}.tray{display:flex;align-items:center;margin-left:225px}.ck{display:flex;flex-direction:column;align-items:flex-end;margin-left:17px;width:62px}`,
`<ui-icon name="win" w="24" style="margin-left:30px"></ui-icon><div class="s">${I('tsearch',16)}${T(58,'Pesquisar')}<ui-icon name="plant" w="36" h="28" style="margin-left:auto"></ui-icon></div>
<task-icon name="taskview"></task-icon><task-icon name="copilot"></task-icon><task-icon name="folder" dot></task-icon><task-icon name="edge" active dot></task-icon><task-icon name="wapp" dot badge="99+" bc="#0078d4" bw="27"></task-icon><task-icon name="telegram" dot badge="..65" bc="#f53b3b" bw="16"></task-icon><task-icon name="wmark"></task-icon><task-icon name="remote" dot></task-icon><task-icon name="cc"></task-icon><task-icon name="wapp" dot></task-icon><task-icon name="cursor"></task-icon><task-icon name="replit"></task-icon><task-icon name="notepad" dot></task-icon><task-icon name="chrome" dot badge="g" bc="#075a9e" bw="16"></task-icon>
<div class="tray">${I('up',12,8)}<ui-icon name="cloud" w="18" h="14" style="margin:0 17px"></ui-icon>${T(23.500,'POR')}<ui-icon name="wifi" w="17" h="15" style="margin:0 7px 0 17.500px"></ui-icon>${I('volume',17,15)}<ui-icon name="battery" w="17" h="15" style="margin-left:7px"></ui-icon><div class="ck" style="margin-left:16px">${T(29,'10:52')}${T(62,'28/07/2025')}</div><ui-icon name="tbell" w="14" h="16" style="margin-left:8px"></ui-icon></div>`);

define('task-icon',`:host{display:flex;width:44px;height:46px;align-items:center;justify-content:center;position:relative;flex:none}.p{width:38px;height:38px;display:grid;place-items:center;border-radius:4px}:host([active]) .p{background:#faf1ec;box-shadow:0 0 1px #0003}
.d{position:absolute;top:39px;left:19px;width:6px;height:3px;border-radius:2px;background:#8d8582}:host([active]) .d{left:14px;width:16px;background:#0078d4}.b{position:absolute;color:#fff;display:flex;align-items:center;justify-content:center}`,
(a,e)=>{const n=a('badge'),pos=n==='99+'?'left:17px;top:6px;height:16px;line-height:16px;font-size:10.500px;border-radius:8px':n==='g'?'left:23px;top:6px;height:16px;line-height:13px;padding-bottom:2px;font-size:10px;border-radius:8px':'left:23px;top:11px;height:11px;line-height:11px;font-size:8px;border-radius:3px';
return `<div class="p">${I(a('name'),24)}</div>${e.hasAttribute('dot')?'<span class="d"></span>':''}${n?`<span class="b" style="${pos};width:${a('bw')}px;background:${a('bc')}">${T(n==='g'?6:n==='99+'?19:13,n)}</span>`:''}`});

fits.forEach(f=>f.fit());
</script>
</body>
</html>
